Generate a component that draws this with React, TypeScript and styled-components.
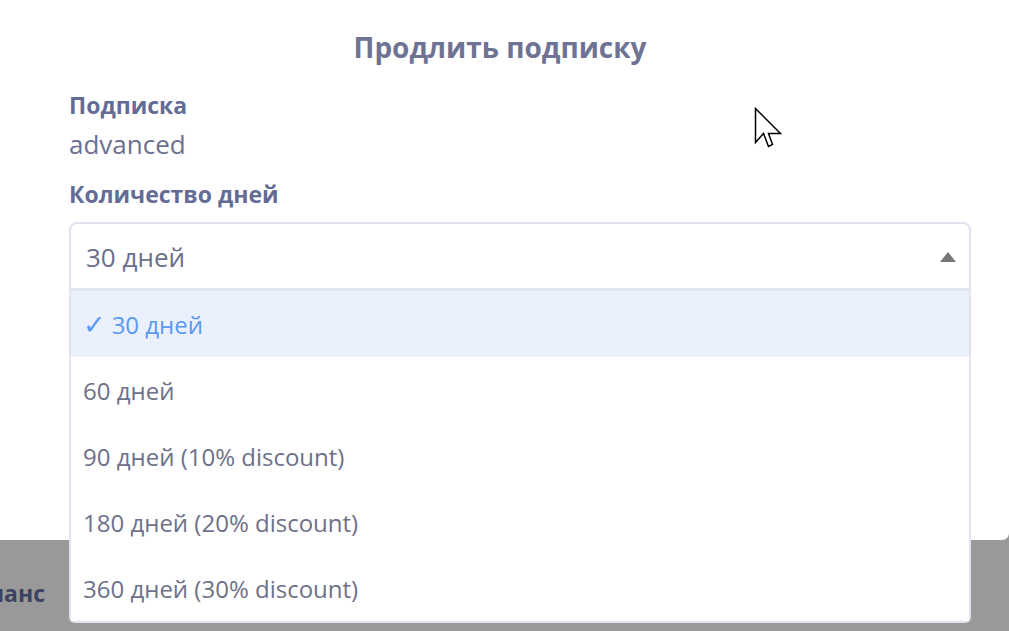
import React from "react";
import styled, { createGlobalStyle } from "styled-components";

const Global = createGlobalStyle`
  html, body { margin: 0; padding: 0; }
  body {
    width: 1009px;
    height: 631px;
    overflow: hidden;
    background: #999999;
    font-family: "Open Sans", "DejaVu Sans", sans-serif;
  }
`;

const Page = styled.div`
  position: relative;
  width: 1009px;
  height: 631px;
  overflow: hidden;
  display: flex;
  flex-direction: column;
`;

const Modal = styled.div`
  margin-left: -9px;
  width: 1018px;
  height: 540px;
  flex: none;
  background: #ffffff;
  border-radius: 0 0 7px 7px;
  padding-top: 28px;
  box-sizing: border-box;
  display: flex;
  flex-direction: column;
`;

const Title = styled.h2`
  margin: 0;
  font-size: 28px;
  line-height: 38px;
  font-weight: 700;
  color: #6f7393;
  text-align: center;
`;

const Body = styled.div`
  padding: 24px 38px 0 78px;
  display: flex;
  flex-direction: column;
`;

const Label = styled.div<{ $gap?: number }>`
  margin-top: ${(p) => p.$gap ?? 0}px;
  font-size: 23px;
  line-height: 31px;
  font-weight: 700;
  color: #646c96;
`;

const Value = styled.div`
  margin-top: 6px;
  font-size: 26px;
  line-height: 35px;
  color: #6b7091;
`;

const SelectWrap = styled.div`
  position: relative;
  margin-top: 12px;
`;

const SelectBox = styled.div`
  height: 69px;
  box-sizing: border-box;
  border: 2px solid #e1e4ec;
  border-bottom-width: 3px;
  border-radius: 8px 8px 0 0;
  padding: 2px 13px 0 15px;
  display: flex;
  align-items: center;
  justify-content: space-between;
  font-size: 26px;
  line-height: 35px;
  color: #6b6f8c;
`;

const Caret = styled.span`
  width: 0;
  height: 0;
  border-left: 8px solid transparent;
  border-right: 8px solid transparent;
  border-bottom: 10px solid #777777;
`;

const List = styled.ul`
  position: absolute;
  top: 100%;
  left: 0;
  right: 0;
  margin: 0;
  padding: 0;
  list-style: none;
  background: #ffffff;
  border: 2px solid #e1e4ec;
  border-top: none;
  border-radius: 0 0 6px 6px;
  z-index: 2;
`;

const Option = styled.li<{ $selected?: boolean }>`
  height: 66px;
  box-sizing: border-box;
  display: flex;
  align-items: center;
  gap: 6px;
  padding: 1px 12px 0;
  font-size: 24px;
  color: ${(p) => (p.$selected ? "#5b9af2" : "#6e7189")};
  background: ${(p) => (p.$selected ? "#eaf0fc" : "#ffffff")};
`;

const Check = styled.span`
  font-family: "DejaVu Sans", sans-serif;
  font-size: 27px;
  line-height: 1;
`;

const Footer = styled.div`
  flex: 1;
  display: flex;
  align-items: center;
  padding-top: 14px;
`;

const FooterTab = styled.div`
  width: 45px;
  display: flex;
  justify-content: flex-end;
  white-space: nowrap;
  font-size: 23px;
  font-weight: 700;
  color: #3c4262;
`;

const Cursor = styled.svg`
  position: absolute;
  left: 754px;
  top: 107px;
  z-index: 5;
`;

const options = [
  "30 дней",
  "60 дней",
  "90 дней (10% discount)",
  "180 дней (20% discount)",
  "360 дней (30% discount)",
];

export default function App() {
  return (
    <>
      <Global />
      <Page>
        <Modal>
          <Title>Продлить подписку</Title>
          <Body>
            <Label>Подписка</Label>
            <Value>advanced</Value>
            <Label $gap={17}>Количество дней</Label>
            <SelectWrap>
              <SelectBox>
                <span>30 дней</span>
                <Caret />
              </SelectBox>
              <List>
                {options.map((o, i) => (
                  <Option key={o} $selected={i === 0}>
                    {i === 0 && <Check>✓</Check>}
                    {o}
                  </Option>
                ))}
              </List>
            </SelectWrap>
          </Body>
        </Modal>
        <Footer>
          <FooterTab>Баланс</FooterTab>
        </Footer>
        <Cursor width="28" height="42" viewBox="0 0 28 42">
          <path
            d="M1.5 1.5 L1.5 35.5 L9.5 26.5 L14.5 39.5 L18.5 37.5 L14.5 26.5 L26.5 26.5 Z"
            fill="#ffffff"
            stroke="#000000"
            strokeWidth="1.5"
            strokeLinejoin="miter"
          />
        </Cursor>
      </Page>
    </>
  );
}
